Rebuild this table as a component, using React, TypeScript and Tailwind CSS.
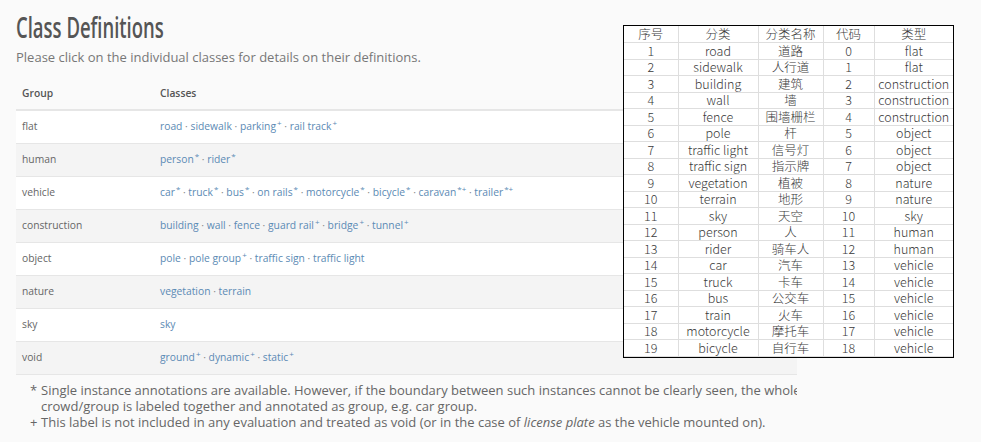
import React from "react"

type Item = { name: string; sup?: string }

const groups: { group: string; items: Item[] }[] = [
  { group: "flat", items: [{ name: "road" }, { name: "sidewalk" }, { name: "parking", sup: "+" }, { name: "rail track", sup: "+" }] },
  { group: "human", items: [{ name: "person", sup: "*" }, { name: "rider", sup: "*" }] },
  {
    group: "vehicle",
    items: [
      { name: "car", sup: "*" },
      { name: "truck", sup: "*" },
      { name: "bus", sup: "*" },
      { name: "on rails", sup: "*" },
      { name: "motorcycle", sup: "*" },
      { name: "bicycle", sup: "*" },
      { name: "caravan", sup: "*+" },
      { name: "trailer", sup: "*+" },
    ],
  },
  {
    group: "construction",
    items: [
      { name: "building" },
      { name: "wall" },
      { name: "fence" },
      { name: "guard rail", sup: "+" },
      { name: "bridge", sup: "+" },
      { name: "tunnel", sup: "+" },
    ],
  },
  { group: "object", items: [{ name: "pole" }, { name: "pole group", sup: "+" }, { name: "traffic sign" }, { name: "traffic light" }] },
  { group: "nature", items: [{ name: "vegetation" }, { name: "terrain" }] },
  { group: "sky", items: [{ name: "sky" }] },
  { group: "void", items: [{ name: "ground", sup: "+" }, { name: "dynamic", sup: "+" }, { name: "static", sup: "+" }] },
]

const rows: [string, string, string, string, string][] = [
  ["1", "road", "道路", "0", "flat"],
  ["2", "sidewalk", "人行道", "1", "flat"],
  ["3", "building", "建筑", "2", "construction"],
  ["4", "wall", "墙", "3", "construction"],
  ["5", "fence", "围墙栅栏", "4", "construction"],
  ["6", "pole", "杆", "5", "object"],
  ["7", "traffic light", "信号灯", "6", "object"],
  ["8", "traffic sign", "指示牌", "7", "object"],
  ["9", "vegetation", "植被", "8", "nature"],
  ["10", "terrain", "地形", "9", "nature"],
  ["11", "sky", "天空", "10", "sky"],
  ["12", "person", "人", "11", "human"],
  ["13", "rider", "骑车人", "12", "human"],
  ["14", "car", "汽车", "13", "vehicle"],
  ["15", "truck", "卡车", "14", "vehicle"],
  ["16", "bus", "公交车", "15", "vehicle"],
  ["17", "train", "火车", "16", "vehicle"],
  ["18", "motorcycle", "摩托车", "17", "vehicle"],
  ["19", "bicycle", "自行车", "18", "vehicle"],
]

function ClassLinks({ items }: { items: Item[] }) {
  return (
    <span>
      {items.map((it, i) => (
        <span key={it.name}>
          {i > 0 && <span className="text-[#8a8a8a]"> · </span>}
          <span className="text-[#5b8ab4]">{it.name}</span>
          {it.sup && <sup className="text-[8px] text-[#5b8ab4] ml-[1px]">{it.sup}</sup>}
        </span>
      ))}
    </span>
  )
}

function MappingTable() {
  const head = ["序号", "分类", "分类名称", "代码", "类型"]
  const widths = ["w-[54px]", "w-[80px]", "w-[65px]", "w-[51px]", "w-[79px]"]
  return (
    <div className="absolute left-[623px] top-[25px] w-[331px] h-[333px] bg-white border border-black font-['Noto_Sans_CJK_SC',sans-serif] font-light text-[12.5px] text-[#3a3a3a]">
      <table className="w-full h-full border-collapse table-fixed">
        <thead>
          <tr className="h-[16.5px]">
            {head.map((h, i) => (
              <th key={h} className={`${widths[i]} font-light leading-none text-center border-b border-l first:border-l-0 border-[#dedede]`}>
                {h}
              </th>
            ))}
          </tr>
        </thead>
        <tbody>
          {rows.map((r) => (
            <tr key={r[0]} className="h-[16.5px]">
              {r.map((c, i) => (
                <td key={i} className="leading-none text-center border-b border-l first:border-l-0 border-[#dedede] whitespace-nowrap">
                  {c}
                </td>
              ))}
            </tr>
          ))}
        </tbody>
      </table>
    </div>
  )
}

export default function App() {
  return (
    <div className="relative w-[981px] h-[442px] overflow-hidden bg-[#fafafa]">
      <div className="w-[797px] overflow-hidden pl-4 font-['Open_Sans',sans-serif]">
        <h1 className="h-[47px] pt-[10px] text-[28px] leading-[34px] font-semibold text-[#555] whitespace-nowrap">
          <span className="inline-block origin-left scale-x-[0.66]">Class Definitions</span>
        </h1>
        <p className="text-[13px] leading-[20px] text-[#777] whitespace-nowrap">
          Please click on the individual classes for details on their definitions.
        </p>

        <table className="mt-[11px] w-[781px] border-collapse text-[10.3px]">
          <thead>
            <tr className="h-[32px] border-b-2 border-[#e6e6e6]">
              <th className="w-[144px] pl-[6px] text-left font-semibold text-[#555]">Group</th>
              <th className="text-left font-semibold text-[#555]">Classes</th>
            </tr>
          </thead>
          <tbody>
            {groups.map((g, i) => (
              <tr key={g.group} className={`h-[33px] border-b border-[#e6e6e6] ${i % 2 === 0 ? "bg-white" : "bg-[#f4f4f4]"}`}>
                <td className="pl-[6px] text-[#666]">{g.group}</td>
                <td className="whitespace-nowrap">
                  <ClassLinks items={g.items} />
                </td>
              </tr>
            ))}
          </tbody>
        </table>

        <div className="mt-[7px] pl-[14px] text-[13px] leading-[16px] text-[#666] whitespace-nowrap">
          <div className="flex">
            <span className="w-[11px] shrink-0">*</span>
            <div>
              <div>Single instance annotations are available. However, if the boundary between such instances cannot be clearly seen, the whole</div>
              <div>crowd/group is labeled together and annotated as group, e.g. car group.</div>
            </div>
          </div>
          <div className="flex">
            <span className="w-[11px] shrink-0">+</span>
            <div>
              This label is not included in any evaluation and treated as void (or in the case of <i>license plate</i> as the vehicle mounted on).
            </div>
          </div>
        </div>
      </div>

      <MappingTable />
    </div>
  )
}
